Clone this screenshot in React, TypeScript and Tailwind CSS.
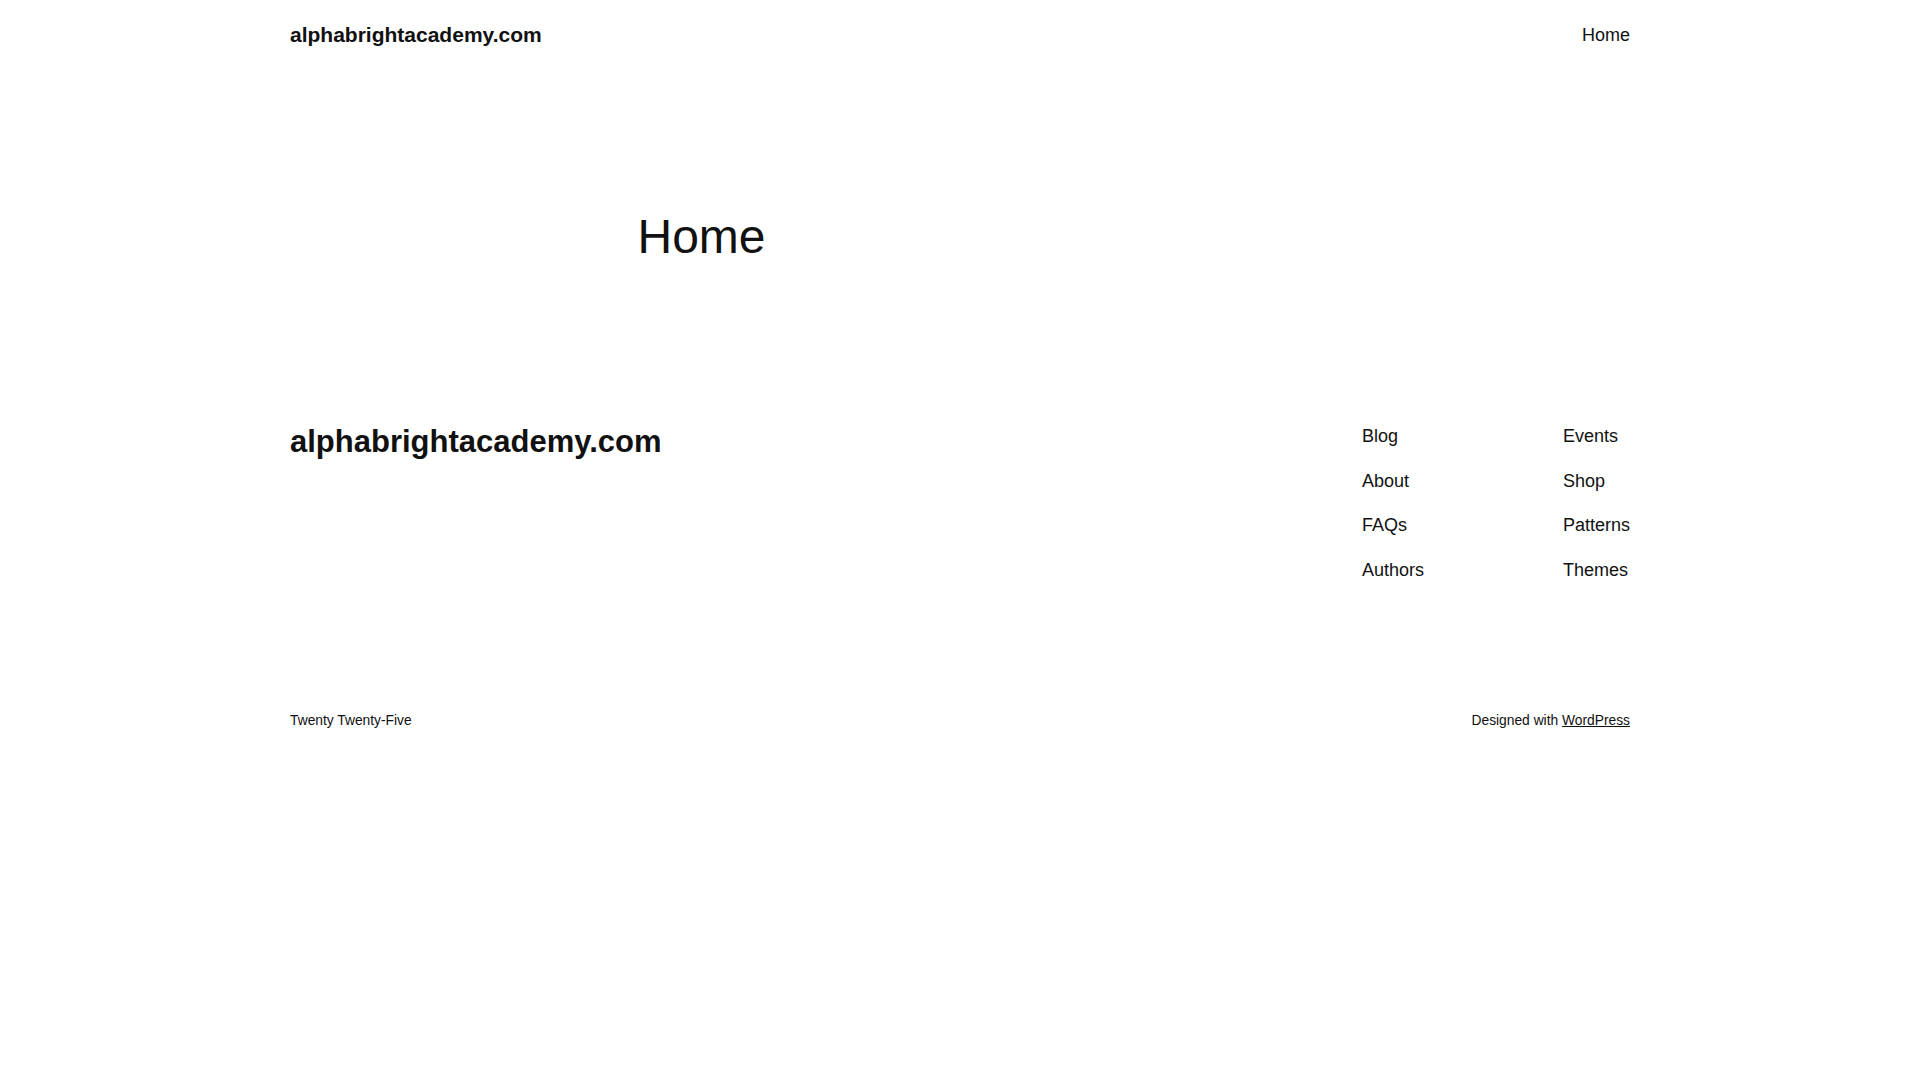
export default function App() {
  const col1 = ["Blog", "About", "FAQs", "Authors"];
  const col2 = ["Events", "Shop", "Patterns", "Themes"];
  return (
    <div
      className="min-h-screen bg-white text-[#111111]"
      style={{ fontFamily: '"Liberation Sans", Arial, sans-serif' }}
    >
      <header className="mx-auto flex h-[70px] w-[1340px] items-center justify-between">
        <a href="#" className="text-[21px] font-bold leading-[28px]">
          alphabrightacademy.com
        </a>
        <nav>
          <a href="#" className="text-[18px] leading-[28px]">
            Home
          </a>
        </nav>
      </header>

      <main className="mx-auto w-[645px] pt-[138px]">
        <h1 className="text-[48px] font-normal leading-[58px]">Home</h1>
      </main>

      <footer className="mx-auto w-[1340px] pt-[156px]">
        <div className="flex items-start justify-between">
          <a href="#" className="text-[31px] font-bold leading-[40px]">
            alphabrightacademy.com
          </a>
          <div className="flex gap-[139px]">
            <ul className="flex flex-col gap-[16.5px]">
              {col1.map((t) => (
                <li key={t} className="text-[18px] leading-[28px]">
                  <a href="#">{t}</a>
                </li>
              ))}
            </ul>
            <ul className="flex flex-col gap-[16.5px]">
              {col2.map((t) => (
                <li key={t} className="text-[18px] leading-[28px]">
                  <a href="#">{t}</a>
                </li>
              ))}
            </ul>
          </div>
        </div>
        <div className="mt-[127px] flex items-center justify-between text-[13.8px] leading-[20px]">
          <span>Twenty Twenty-Five</span>
          <span>
            Designed with{" "}
            <a href="#" className="underline">
              WordPress
            </a>
          </span>
        </div>
      </footer>
    </div>
  );
}
